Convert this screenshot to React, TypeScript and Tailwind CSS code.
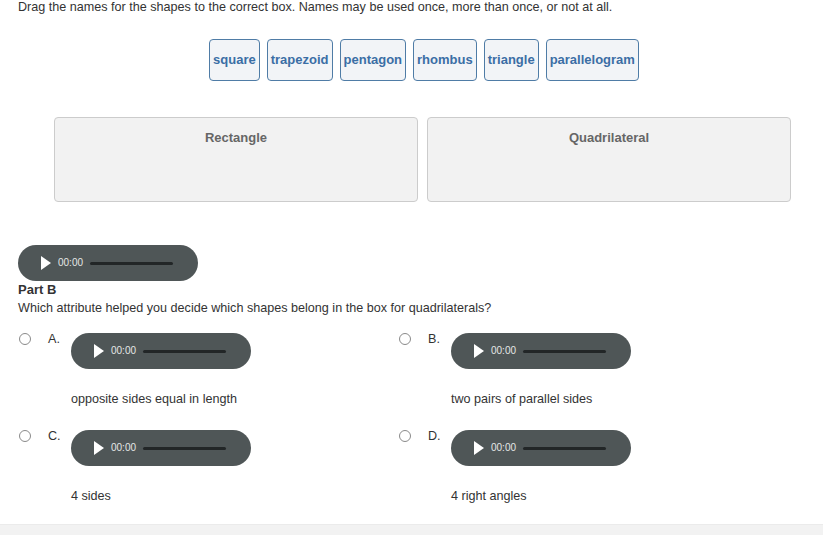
import React from 'react';

const tiles = ['square', 'trapezoid', 'pentagon', 'rhombus', 'triangle', 'parallelogram'];

const options = [
  { letter: 'A.', text: 'opposite sides equal in length' },
  { letter: 'B.', text: 'two pairs of parallel sides' },
  { letter: 'C.', text: '4 sides' },
  { letter: 'D.', text: '4 right angles' },
];

function AudioPlayer() {
  return (
    <div className="relative flex h-[36px] w-[180px] items-center rounded-full bg-[#4f5657]">
      <svg className="ml-[23px] h-[14px] w-[10px]" viewBox="0 0 10 14">
        <path d="M0 0 L10 7 L0 14 Z" fill="#ffffff" />
      </svg>
      <span className="ml-[7px] text-[10px] leading-none text-[#e4e6e6]">00:00</span>
      <div className="ml-[7px] h-[3px] w-[83px] rounded-full bg-[#222627]" />
    </div>
  );
}

function Option({ letter, text }: { letter: string; text: string }) {
  return (
    <div className="flex flex-col">
      <div className="flex items-start">
        <div className="ml-px mt-[2px] h-[12px] w-[12px] rounded-full border border-[#8a8a8a] bg-white" />
        <span className="ml-[17px] w-[23px] pt-px text-[12.6px] leading-[15px] text-[#333]">{letter}</span>
        <div className="mt-[2px]">
          <AudioPlayer />
        </div>
      </div>
      <div className="ml-[53px] mt-[23px] text-[12.6px] leading-[15px] text-[#333]">{text}</div>
    </div>
  );
}

export default function App() {
  return (
    <div className="relative h-[535px] w-[823px] overflow-hidden bg-white" style={{ fontFamily: '"Liberation Sans", Arial, sans-serif' }}>
      <div className="pl-[18px] text-[12.6px] leading-[15px] text-[#333]">
        Drag the names for the shapes to the correct box. Names may be used once, more than once, or not at all.
      </div>

      <div className="ml-[54px] w-[737px]">
        <div className="mt-[24px] flex justify-center gap-[7px] pl-[3px]">
          {tiles.map((t) => (
            <div
              key={t}
              className="flex h-[42px] items-center rounded-[4px] border border-[#4f7ca6] bg-[#f2f4f7] px-[3px] text-[13px] font-bold text-[#3b6ea5]"
            >
              {t}
            </div>
          ))}
        </div>

        <div className="mt-[36px] grid grid-cols-2 gap-[9px]">
          {['Rectangle', 'Quadrilateral'].map((label) => (
            <div
              key={label}
              className="h-[85px] rounded-[4px] border border-[#cccccc] bg-[#f2f2f2] pt-[12px] text-center text-[13px] font-bold leading-[15px] text-[#666]"
            >
              {label}
            </div>
          ))}
        </div>
      </div>

      <div className="pl-[18px]">
        <div className="mt-[43px]">
          <AudioPlayer />
        </div>
        <div className="mt-[1px] text-[13px] font-bold leading-[15px] text-[#333]">Part B</div>
        <div className="mt-[4px] text-[12.6px] leading-[15px] text-[#333]">
          Which attribute helped you decide which shapes belong in the box for quadrilaterals?
        </div>

        <div className="mt-[15px] grid w-[760px] grid-cols-2 gap-y-[21px]">
          {options.map((o) => (
            <Option key={o.letter} letter={o.letter} text={o.text} />
          ))}
        </div>
      </div>

      <div className="absolute bottom-0 left-0 h-[11px] w-full border-t border-[#ebebeb] bg-[#f2f2f2]" />
    </div>
  );
}
